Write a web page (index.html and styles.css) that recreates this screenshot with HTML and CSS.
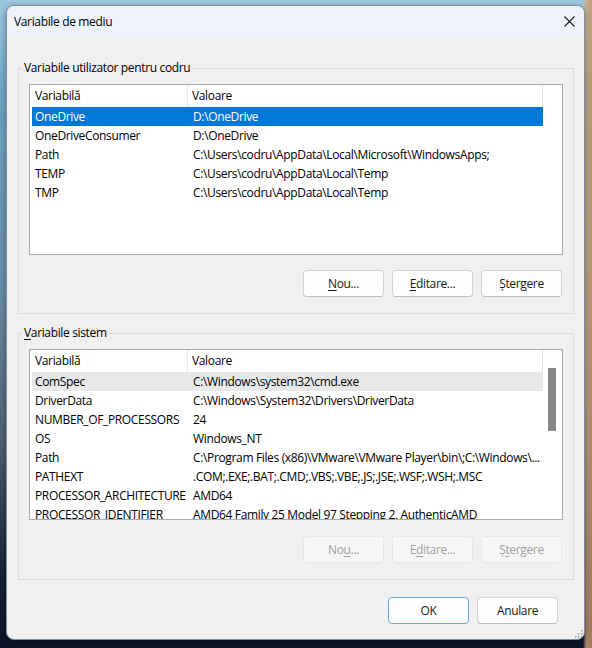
FILE: index.html
```html
<!DOCTYPE html>
<html lang="ro">
<head>
<meta charset="utf-8">
<title>Variabile de mediu</title>
<link rel="stylesheet" href="styles.css">
</head>
<body>
<div class="desktop">
  <div class="window">
    <div class="titlebar">
      <span class="title">Variabile de mediu</span>
      <span class="close">
        <svg width="11" height="11" viewBox="0 0 11 11"><path d="M0.5 0.5 L10.5 10.5 M10.5 0.5 L0.5 10.5" stroke="#1a1a1a" stroke-width="1.1" fill="none"/></svg>
      </span>
    </div>
    <div class="content">
      <fieldset class="group">
        <legend>Variabile utilizator pentru codru</legend>
        <div class="listbox">
          <div class="listview">
            <div class="header row">
              <div class="cell c1">Variabilă</div>
              <div class="cell c2">Valoare</div>
            </div>
            <div class="row selected"><div class="cell c1">OneDrive</div><div class="cell c2">D:\OneDrive</div></div>
            <div class="row"><div class="cell c1">OneDriveConsumer</div><div class="cell c2">D:\OneDrive</div></div>
            <div class="row"><div class="cell c1">Path</div><div class="cell c2">C:\Users\codru\AppData\Local\Microsoft\WindowsApps;</div></div>
            <div class="row"><div class="cell c1">TEMP</div><div class="cell c2">C:\Users\codru\AppData\Local\Temp</div></div>
            <div class="row"><div class="cell c1">TMP</div><div class="cell c2">C:\Users\codru\AppData\Local\Temp</div></div>
          </div>
          <div class="scrollarea"></div>
        </div>
        <div class="btnrow">
          <button class="btn"><u>N</u>ou...</button>
          <button class="btn"><u>E</u>ditare...</button>
          <button class="btn">Șter<u>g</u>ere</button>
        </div>
      </fieldset>

      <fieldset class="group group2">
        <legend><u>V</u>ariabile sistem</legend>
        <div class="listbox">
          <div class="listview">
            <div class="header row">
              <div class="cell c1">Variabilă</div>
              <div class="cell c2">Valoare</div>
            </div>
            <div class="row hot"><div class="cell c1">ComSpec</div><div class="cell c2">C:\Windows\system32\cmd.exe</div></div>
            <div class="row"><div class="cell c1">DriverData</div><div class="cell c2">C:\Windows\System32\Drivers\DriverData</div></div>
            <div class="row"><div class="cell c1">NUMBER_OF_PROCESSORS</div><div class="cell c2">24</div></div>
            <div class="row"><div class="cell c1">OS</div><div class="cell c2">Windows_NT</div></div>
            <div class="row"><div class="cell c1">Path</div><div class="cell c2">C:\Program Files (x86)\VMware\VMware Player\bin\;C:\Windows\...</div></div>
            <div class="row"><div class="cell c1">PATHEXT</div><div class="cell c2">.COM;.EXE;.BAT;.CMD;.VBS;.VBE;.JS;.JSE;.WSF;.WSH;.MSC</div></div>
            <div class="row"><div class="cell c1">PROCESSOR_ARCHITECTURE</div><div class="cell c2">AMD64</div></div>
            <div class="row"><div class="cell c1">PROCESSOR_IDENTIFIER</div><div class="cell c2">AMD64 Family 25 Model 97 Stepping 2, AuthenticAMD</div></div>
          </div>
          <div class="scrollarea scrollbar"><div class="thumb"></div></div>
        </div>
        <div class="btnrow">
          <button class="btn" disabled>No<u>u</u>...</button>
          <button class="btn" disabled>E<u>d</u>itare...</button>
          <button class="btn" disabled>Ș<u>t</u>ergere</button>
        </div>
      </fieldset>

      <div class="dlgbtns">
        <button class="btn default">OK</button>
        <button class="btn">Anulare</button>
      </div>
    </div>
    <div class="grip">
      <svg width="9" height="9" viewBox="0 0 9 9" fill="#9a9a9a">
        <rect x="7" y="1" width="1.5" height="1.5"/>
        <rect x="4" y="4" width="1.5" height="1.5"/><rect x="7" y="4" width="1.5" height="1.5"/>
        <rect x="1" y="7" width="1.5" height="1.5"/><rect x="4" y="7" width="1.5" height="1.5"/><rect x="7" y="7" width="1.5" height="1.5"/>
      </svg>
    </div>
  </div>
</div>
</body>
</html>
```

FILE: styles.css
```css
* { box-sizing: border-box; }

html, body {
  margin: 0;
  padding: 0;
  width: 592px;
  height: 648px;
  overflow: hidden;
}

body {
  font-family: "Open Sans", "Noto Sans", sans-serif;
  font-size: 12px;
  letter-spacing: -0.35px;
  color: #000;
}

.desktop {
  width: 592px;
  height: 648px;
  padding: 5px 7px 8px 6px;
  background:
    linear-gradient(to right, rgba(0,0,0,0) 0, rgba(0,0,0,0) 583px, rgba(215,170,120,0.75) 586px, rgba(200,150,100,0.8) 592px),
    linear-gradient(to bottom, #9cc9e0 0, #6fa4c4 15%, #6b8ea8 45%, #4b5b70 70%, #16223a 88%, #0a1328 100%);
}

.window {
  position: relative;
  width: 579px;
  height: 635px;
  background: #f0f0f0;
  border: 1px solid #7d8e9c;
  border-radius: 8px;
  overflow: hidden;
  box-shadow: 0 2px 6px rgba(0,0,0,0.35);
}

.titlebar {
  height: 31px;
  background: #edf3f8;
  display: flex;
  align-items: center;
  justify-content: space-between;
  padding: 0 9px 0 7px;
}

.title {
  font-size: 12px;
  line-height: 16px;
}

.close {
  display: flex;
  width: 11px;
  height: 11px;
  margin-top: -1px;
}

.content {
  padding: 23px 10px 0 11px;
}

.group {
  margin: 0;
  padding: 8px 10px 16px 10px;
  border: 1px solid #dcdcdc;
  min-width: 0;
}

.group legend {
  padding: 0 2px;
  margin-left: -7px;
  line-height: 16px;
}

.group2 {
  margin-top: 11px;
}

u {
  text-decoration-thickness: 1px;
  text-underline-offset: 2px;
}

.listbox {
  display: flex;
  height: 171px;
  background: #fff;
  border: 1px solid #acacac;
  overflow: hidden;
}

.listview {
  width: 513px;
  padding-left: 2px;
  overflow: hidden;
}

.row {
  display: flex;
  height: 19px;
  line-height: 19px;
  white-space: nowrap;
}

.row .cell {
  overflow: hidden;
}

.c1 {
  width: 156px;
  flex: none;
  padding-left: 3px;
}

.c2 {
  flex: 1;
  padding-left: 5px;
}

.header {
  height: 22px;
  line-height: 22px;
  background: #fff;
}

.header .c1 {
  border-right: 1px solid #e5e5e5;
}

.header .c2 {
  padding-left: 4px;
  border-right: 1px solid #e5e5e5;
}

.selected {
  background: #0078d7;
  color: #fff;
}

.hot {
  background: #e8e8e8;
}

.scrollarea {
  width: 18px;
  flex: none;
  background: #fff;
}

.scrollbar {
  padding: 18px 5px 0 5px;
}

.thumb {
  width: 8px;
  height: 63px;
  background: #868686;
  border-radius: 1px;
}

.btnrow {
  display: flex;
  justify-content: flex-end;
  gap: 8px;
  padding-right: 1px;
  margin-top: 15px;
}

.group2 .btnrow {
  margin-top: 16px;
}

.btn {
  width: 81px;
  height: 27px;
  padding: 0;
  font-family: inherit;
  font-size: 12px;
  letter-spacing: -0.35px;
  color: #1a1a1a;
  background: #fdfdfd;
  border: 1px solid #d2d2d2;
  border-bottom-color: #bdbdbd;
  border-radius: 4px;
}

.btn:disabled {
  background: #f6f6f6;
  border-color: #e6e6e6;
  color: #a0a0a0;
}

.btn.default {
  border: 1px solid #6aa8e2;
}

.dlgbtns {
  display: flex;
  justify-content: flex-end;
  gap: 8px;
  margin-top: 17px;
  padding-right: 16px;
}

.grip {
  position: absolute;
  right: 1px;
  bottom: 1px;
  width: 9px;
  height: 9px;
  display: flex;
}
```
